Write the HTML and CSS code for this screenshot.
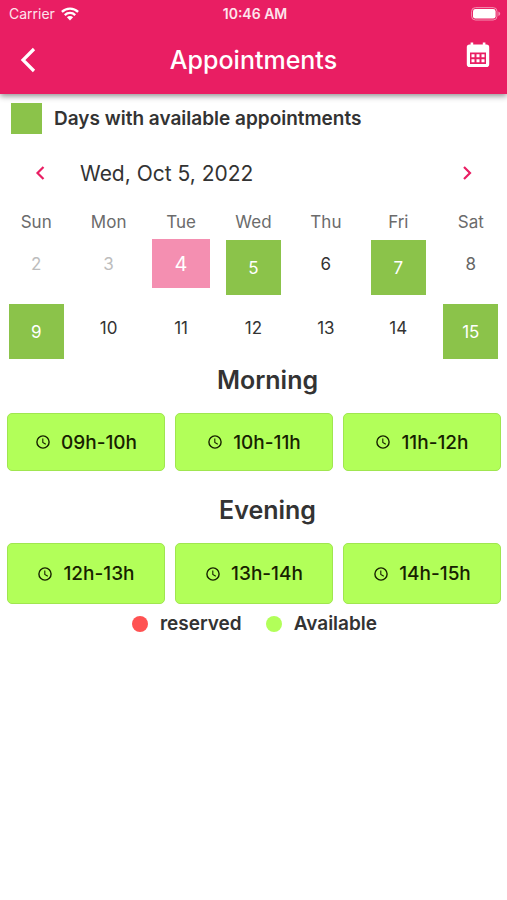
FILE: index.html
```html
<!DOCTYPE html>
<html lang="en">
<head>
<meta charset="utf-8">
<meta name="viewport" content="width=device-width, initial-scale=1">
<title>Appointments</title>
<link rel="stylesheet" href="styles.css">
</head>
<body>
<svg class="sprite" aria-hidden="true">
  <symbol id="clock" viewBox="0 0 16 16"><circle cx="8" cy="8" r="6.1" fill="none" stroke="currentColor" stroke-width="1.4"/><path d="M7.8 4.4v4l3 1.8" fill="none" stroke="currentColor" stroke-width="1.1"/></symbol>
</svg>
<header class="app-header">
  <div class="status">
    <span class="carrier">Carrier
      <svg width="18" height="14" viewBox="0 0 18 14" aria-hidden="true"><g fill="none" stroke="#fff" stroke-width="2.3"><path d="M.9 4.9a11.5 11.5 0 0 1 16.2 0"/><path d="M3.8 8.1a7.4 7.4 0 0 1 10.4 0"/></g><path d="M5.9 10.3a4.4 4.4 0 0 1 6.2 0L9 13.5z" fill="#fff"/></svg>
    </span>
    <span class="time">10:46 AM</span>
    <span class="battery">
      <svg width="30" height="14" viewBox="0 0 30 14" aria-hidden="true"><rect x=".6" y=".6" width="25.4" height="12.4" rx="3.8" fill="none" stroke="#f48fb1" stroke-width="1"/><rect x="2" y="2" width="22.6" height="9.6" rx="2.4" fill="#fff"/><path d="M27.4 4.6c2.4.8 2.4 3.6 0 4.4z" fill="#f48fb1"/></svg>
    </span>
  </div>
  <div class="toolbar">
    <button class="icon-btn back" type="button" aria-label="Back"><svg width="16" height="26" viewBox="0 0 16 26"><path d="M14 2 3 13l11 11" fill="none" stroke="#fff" stroke-width="3.2"/></svg></button>
    <h1>Appointments</h1>
    <button class="icon-btn calendar-btn" type="button" aria-label="Open calendar"><svg width="24" height="26" viewBox="0 0 24 26"><path fill="#fff" fill-rule="evenodd" d="M4.6.5h2.6v2h9.6v-2h2.6v2h1A2.8 2.8 0 0 1 23.2 5.3v17a2.8 2.8 0 0 1-2.8 2.8H3.6A2.8 2.8 0 0 1 .8 22.3v-17A2.8 2.8 0 0 1 3.6 2.5h1zM4 10.500v11.500h16V10.500z"/><g fill="#fff"><path d="M5.500 12.300h3v3h-3zM10.500 12.300h3v3h-3zM15.500 12.300h3v3h-3zM5.500 17.300h3v3h-3zM10.500 17.300h3v3h-3zM15.500 17.300h3v3h-3z"/></g></svg></button>
  </div>
</header>
<main>
  <p class="day-key"><span class="swatch"></span>Days with available appointments</p>
  <div class="date-nav">
    <button class="icon-btn" type="button" aria-label="Previous week"><svg width="10" height="16" viewBox="0 0 10 16"><path d="M8.500 2 2.500 8l6 6" fill="none" stroke="currentColor" stroke-width="2.200"/></svg></button>
    <h2>Wed, Oct 5, 2022</h2>
    <button class="icon-btn" type="button" aria-label="Next week"><svg width="10" height="16" viewBox="0 0 10 16"><path d="m2 2 6 6-6 6" fill="none" stroke="currentColor" stroke-width="2.200"/></svg></button>
  </div>
  <table class="calendar">
    <thead><tr><th>Sun</th><th>Mon</th><th>Tue</th><th>Wed</th><th>Thu</th><th>Fri</th><th>Sat</th></tr></thead>
    <tbody>
      <tr>
        <td><button class="day" type="button" disabled>2</button></td>
        <td><button class="day" type="button" disabled>3</button></td>
        <td><button class="day selected" type="button">4</button></td>
        <td><button class="day open" type="button">5</button></td>
        <td><button class="day" type="button">6</button></td>
        <td><button class="day open" type="button">7</button></td>
        <td><button class="day weekend" type="button">8</button></td>
      </tr>
      <tr>
        <td><button class="day open" type="button">9</button></td>
        <td><button class="day" type="button">10</button></td>
        <td><button class="day" type="button">11</button></td>
        <td><button class="day" type="button">12</button></td>
        <td><button class="day" type="button">13</button></td>
        <td><button class="day" type="button">14</button></td>
        <td><button class="day open" type="button">15</button></td>
      </tr>
    </tbody>
  </table>
  <section class="period morning">
    <h2>Morning</h2>
    <div class="slots">
      <button class="slot" type="button"><svg><use href="#clock"/></svg>09h-10h</button>
      <button class="slot" type="button"><svg><use href="#clock"/></svg>10h-11h</button>
      <button class="slot" type="button"><svg><use href="#clock"/></svg>11h-12h</button>
    </div>
  </section>
  <section class="period evening">
    <h2>Evening</h2>
    <div class="slots">
      <button class="slot" type="button"><svg><use href="#clock"/></svg>12h-13h</button>
      <button class="slot" type="button"><svg><use href="#clock"/></svg>13h-14h</button>
      <button class="slot" type="button"><svg><use href="#clock"/></svg>14h-15h</button>
    </div>
  </section>
  <ul class="legend">
    <li><span class="dot reserved"></span>reserved</li>
    <li><span class="dot available"></span>Available</li>
  </ul>
</main>
</body>
</html>
```
FILE: styles.css
```css
* { box-sizing: border-box; }
body {
  margin: 0;
  background: #fff;
  color: #333;
  font-family: Inter, "Liberation Sans", sans-serif;
}
h1, h2, p, ul { margin: 0; padding: 0; }
button {
  margin: 0;
  padding: 0;
  border: 0;
  background: none;
  color: inherit;
  font: inherit;
}
svg { display: block; flex: none; }
.sprite { position: absolute; width: 0; height: 0; }

.app-header {
  height: 94px;
  background: #e91e63;
  color: #fff;
  box-shadow: 0 2px 6px rgba(0, 0, 0, .45);
}
.status {
  display: grid;
  grid-template-columns: 1fr auto 1fr;
  align-items: center;
  height: 27px;
  padding: 0 6px 0 9px;
  font-size: 14px;
  color: #fde4ec;
}
.carrier { display: flex; align-items: center; gap: 6px; }
.time { font-weight: 600; }
.battery { justify-self: end; }
.toolbar {
  display: grid;
  grid-template-columns: 56px 1fr 56px;
  align-items: center;
  height: 66px;
}
.toolbar h1 {
  text-align: center;
  font-size: 25px;
  line-height: 32px;
  font-weight: 500;
}
.icon-btn { display: flex; align-items: center; justify-content: center; height: 48px; }
.calendar-btn { padding: 0 3px 10px 0; }

.day-key {
  display: flex;
  align-items: center;
  gap: 12px;
  height: 48px;
  padding-left: 11px;
  font-size: 19px;
  font-weight: 600;
}
.swatch { width: 31px; height: 31px; background: #8bc34a; }
.date-nav {
  display: grid;
  grid-template-columns: 80px 1fr 80px;
  align-items: center;
  height: 62px;
}
.date-nav .icon-btn { color: #e91e63; }
.date-nav h2 { font-size: 21px; font-weight: 400; }

.calendar { width: 100%; table-layout: fixed; border-collapse: collapse; }
.calendar th {
  height: 35px;
  padding: 0;
  font-size: 17px;
  font-weight: 400;
  color: #6b6b6b;
}
.calendar td { height: 64px; padding: 0; vertical-align: top; }
.day {
  display: block;
  width: 58px;
  height: 49px;
  margin: 0 auto;
  font-size: 17px;
}
.day:disabled { color: #bdbdbd; }
.day.weekend { color: #666; }
.day.selected { background: #f48fb1; color: #fff; font-size: 20px; }
.day.open {
  width: 55px;
  height: 55px;
  margin-top: 1px;
  background: #8bc34a;
  color: #fff;
}

.period h2 {
  padding-left: 28px;
  text-align: center;
  font-size: 25px;
  line-height: 26px;
  font-weight: 600;
}
.period .slots {
  display: grid;
  grid-template-columns: repeat(3, 1fr);
  gap: 10px;
  margin-top: 20px;
  padding: 0 6px 0 7px;
}
.evening { margin-top: 26px; }
.slot {
  display: flex;
  align-items: center;
  justify-content: center;
  gap: 10px;
  height: 58px;
  border: 1px solid #a0e650;
  border-radius: 5px;
  background: #b2ff59;
  color: #172100;
  font-size: 19px;
  font-weight: 500;
}
.evening .slot { height: 61px; }
.slot svg { width: 16px; height: 16px; }

.legend {
  display: flex;
  justify-content: center;
  gap: 24px;
  margin-top: 7px;
  padding-left: 2px;
  list-style: none;
  font-size: 19px;
  line-height: 26px;
  font-weight: 600;
}
.legend li { display: flex; align-items: center; gap: 12px; }
.dot { width: 16px; height: 16px; border-radius: 50%; }
.reserved { background: #ff5252; }
.available { background: #b2ff59; }
```
